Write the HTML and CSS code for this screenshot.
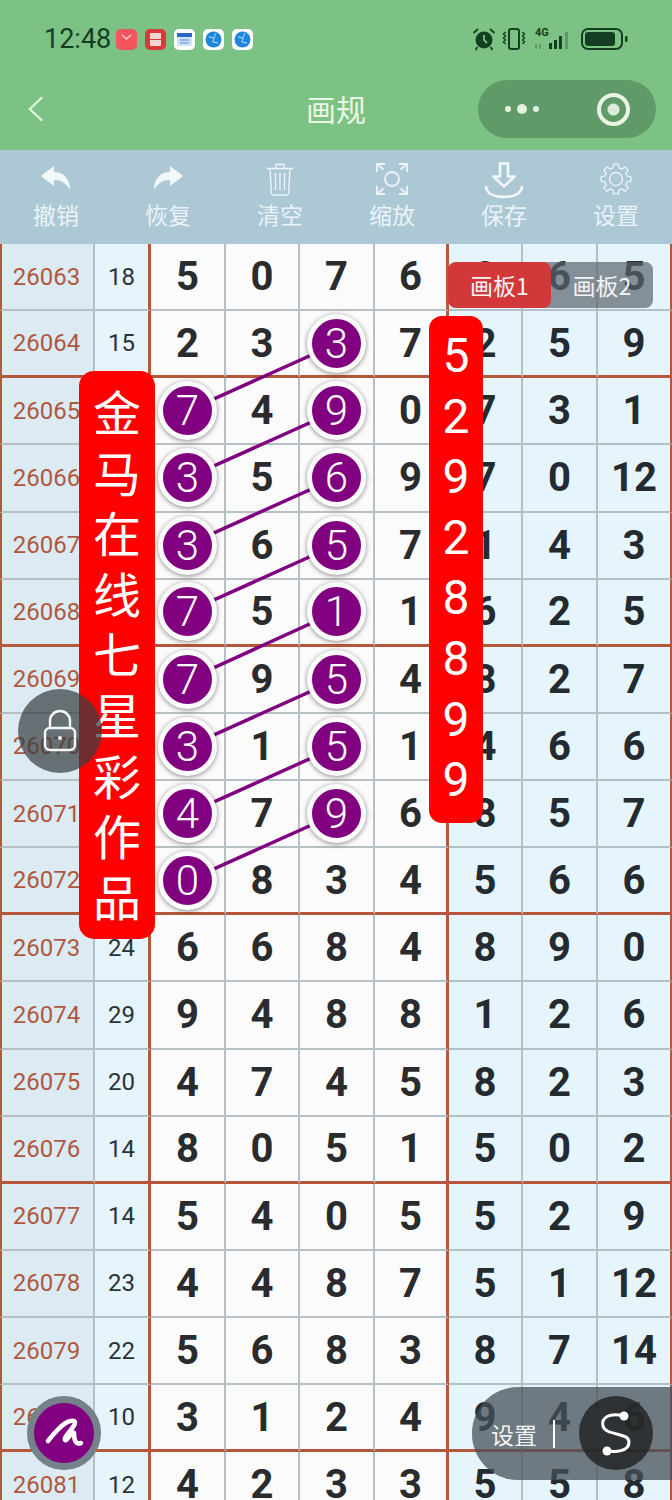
FILE: index.html
```html
<!DOCTYPE html>
<html lang="zh">
<head>
<meta charset="utf-8">
<title>画规</title>
<link rel="stylesheet" href="styles.css">
</head>
<body>
<div class="page">
  <header class="head">
    <div class="status">
      <span class="time">12:48</span>
      <div class="notes">
        <span class="note red"><svg viewBox="0 0 21 21"><path d="M6 6l4.500 4 4.500-4" fill="none" stroke="#ffd0d0" stroke-width="1.500"/></svg></span>
        <span class="note dred"><svg viewBox="0 0 21 21"><rect x="5" y="4" width="11" height="13" rx="1" fill="#f7d5d5"/><path d="M5 10.500h11" stroke="#d93a3a"/></svg></span>
        <span class="note"><svg viewBox="0 0 21 21"><rect x="3" y="4" width="15" height="13" rx="2" fill="#cfe2fa"/><rect x="3" y="4" width="15" height="4" fill="#2a66c8"/><path d="M6 11h9M6 14h9" stroke="#7fa8e0" stroke-width="1.500"/></svg></span>
        <span class="note"><svg viewBox="0 0 21 21"><circle cx="10.500" cy="10.500" r="8" fill="#1f86de"/><path d="M6 8l5 1-1 4 5 1M13 4l-2 5" fill="none" stroke="#8cc8f5" stroke-width="1.300"/></svg></span>
        <span class="note"><svg viewBox="0 0 21 21"><circle cx="10.500" cy="10.500" r="8" fill="#1f86de"/><path d="M6 8l5 1-1 4 5 1M13 4l-2 5" fill="none" stroke="#8cc8f5" stroke-width="1.300"/></svg></span>
      </div>
      <div class="sys">
        <svg class="s-alarm" viewBox="0 0 24 24"><circle cx="12" cy="13" r="8.500" fill="#143f22"/><path d="M12 8v5l3 3" fill="none" stroke="#7dc285" stroke-width="1.800"/><path d="M1.500 6L6 2M22.500 6L18 2M5.500 20l-2 3M18.500 20l2 3" stroke="#143f22" stroke-width="1.800" fill="none"/></svg>
        <svg class="s-vib" viewBox="0 0 26 22"><rect x="8" y="1" width="10" height="20" rx="2" fill="none" stroke="#143f22" stroke-width="2"/><path d="M4.500 4l-2 2 2 2-2 2 2 2-2 2 2 2M21.500 4l2 2-2 2 2 2-2 2 2 2-2 2" fill="none" stroke="#143f22" stroke-width="1.500"/></svg>
        <div class="s-net"><span class="g4">4G</span><svg viewBox="0 0 38 22"><rect x="0" y="16" width="2" height="5" fill="#5c9a68"/><rect x="4" y="16" width="2" height="5" fill="#5c9a68"/><rect x="14" y="15" width="3" height="6" fill="#143f22"/><rect x="19" y="12" width="3" height="9" fill="#143f22"/><rect x="24" y="8" width="3" height="13" fill="#143f22"/><rect x="30" y="4" width="3" height="17" fill="#5c9a68"/></svg></div>
        <svg class="s-bat" viewBox="0 0 47 22"><rect x="1" y="1" width="40" height="20" rx="6" fill="none" stroke="#143f22" stroke-width="2"/><rect x="4" y="4" width="30" height="14" rx="3" fill="#143f22"/><rect x="44" y="8" width="2.500" height="6" rx="1.200" fill="#143f22"/></svg>
      </div>
    </div>
    <nav class="nav">
      <svg class="back" viewBox="0 0 20 30"><path d="M17 2L3 15l14 13" fill="none" stroke="#e4f5dd" stroke-width="2.400"/></svg>
      <span class="title">画规</span>
      <div class="capsule">
        <span class="dots"><i></i><i class="big"></i><i></i></span>
        <span class="ring"></span>
      </div>
    </nav>
  </header>
  <div class="tools">
    <div class="tool"><svg viewBox="0 0 32 34"><path d="M1 14L14 4v6c10 0 16 7 16 18-4-7-9-10-16-10v6z" fill="#f2f7f9"/></svg><span>撤销</span></div>
    <div class="tool"><svg viewBox="0 0 32 34"><path d="M31 14L18 4v6C8 10 2 17 2 28c4-7 9-10 16-10v6z" fill="#f2f7f9"/></svg><span>恢复</span></div>
    <div class="tool"><svg viewBox="0 0 32 34" fill="none" stroke="#eef5f8" stroke-width="1.300"><path d="M3 6.500h26M12 6V2.500h8V6M6 7l1.500 24.500c0 1 1 1.500 2 1.500h13c1 0 2-.5 2-1.500L26 7M11.500 11v17M16 11v17M20.500 11v17"/></svg><span>清空</span></div>
    <div class="tool"><svg viewBox="0 0 32 34" fill="none" stroke="#eef5f8" stroke-width="1.800"><circle cx="16" cy="17" r="7"/><path d="M1 10V2h8M1.500 2.500l6 5M31 10V2h-8M30.500 2.500l-6 5M1 24v8h8M1.500 31.500l6-5M31 24v8h-8M30.500 31.500l-6-5"/></svg><span>缩放</span></div>
    <div class="tool"><svg class="wide" viewBox="0 0 40 37" fill="none" stroke="#f2f7f9" stroke-width="2.600"><path d="M16 1.500h8v13h6.500L20 24.500 9.500 14.500H16z" stroke-linejoin="round"/><path d="M2 25c1 7 9 10 18 10s17-3 18-10" stroke-linecap="round"/></svg><span>保存</span></div>
    <div class="tool"><svg viewBox="0 0 32 34" fill="none" stroke="#eef5f8" stroke-width="1.300"><g transform="translate(0 1)"><path stroke-linejoin="round" d="M13.220 4.840L13.650 1.200H18.350L18.780 4.840L21.920 6.140L24.820 3.860L28.140 7.180L25.860 10.080L27.160 13.220L30.800 13.650V18.350L27.160 18.780L25.860 21.920L28.140 24.820L24.820 28.140L21.920 25.860L18.780 27.160L18.350 30.800H13.650L13.220 27.160L10.080 25.860L7.180 28.140L3.860 24.820L6.140 21.920L4.840 18.780L1.200 18.350V13.650L4.840 13.220L6.140 10.080L3.860 7.180L7.180 3.860L10.080 6.140Z"/><circle cx="16" cy="16" r="6.500"/></g></svg><span>设置</span></div>
  </div>
  <main class="sheet">
    <div class="row"><div class="c date">26063</div><div class="c sum">18</div><div class="c n">5</div><div class="c n">0</div><div class="c n">7</div><div class="c n e">6</div><div class="c n b">8</div><div class="c n b">6</div><div class="c n b l">5</div></div>
    <div class="row sep"><div class="c date">26064</div><div class="c sum">15</div><div class="c n">2</div><div class="c n">3</div><div class="c n"><span class="ball">3</span></div><div class="c n e">7</div><div class="c n b">2</div><div class="c n b">5</div><div class="c n b l">9</div></div>
    <div class="row"><div class="c date">26065</div><div class="c sum">20</div><div class="c n"><span class="ball">7</span></div><div class="c n">4</div><div class="c n"><span class="ball">9</span></div><div class="c n e">0</div><div class="c n b">7</div><div class="c n b">3</div><div class="c n b l">1</div></div>
    <div class="row"><div class="c date">26066</div><div class="c sum">23</div><div class="c n"><span class="ball">3</span></div><div class="c n">5</div><div class="c n"><span class="ball">6</span></div><div class="c n e">9</div><div class="c n b">7</div><div class="c n b">0</div><div class="c n b l">12</div></div>
    <div class="row"><div class="c date">26067</div><div class="c sum">21</div><div class="c n"><span class="ball">3</span></div><div class="c n">6</div><div class="c n"><span class="ball">5</span></div><div class="c n e">7</div><div class="c n b">1</div><div class="c n b">4</div><div class="c n b l">3</div></div>
    <div class="row sep"><div class="c date">26068</div><div class="c sum">14</div><div class="c n"><span class="ball">7</span></div><div class="c n">5</div><div class="c n"><span class="ball">1</span></div><div class="c n e">1</div><div class="c n b">6</div><div class="c n b">2</div><div class="c n b l">5</div></div>
    <div class="row"><div class="c date">26069</div><div class="c sum">25</div><div class="c n"><span class="ball">7</span></div><div class="c n">9</div><div class="c n"><span class="ball">5</span></div><div class="c n e">4</div><div class="c n b">8</div><div class="c n b">2</div><div class="c n b l">7</div></div>
    <div class="row"><div class="c date">26070</div><div class="c sum">10</div><div class="c n"><span class="ball">3</span></div><div class="c n">1</div><div class="c n"><span class="ball">5</span></div><div class="c n e">1</div><div class="c n b">4</div><div class="c n b">6</div><div class="c n b l">6</div></div>
    <div class="row"><div class="c date">26071</div><div class="c sum">26</div><div class="c n"><span class="ball">4</span></div><div class="c n">7</div><div class="c n"><span class="ball">9</span></div><div class="c n e">6</div><div class="c n b">8</div><div class="c n b">5</div><div class="c n b l">7</div></div>
    <div class="row sep"><div class="c date">26072</div><div class="c sum">15</div><div class="c n"><span class="ball">0</span></div><div class="c n">8</div><div class="c n">3</div><div class="c n e">4</div><div class="c n b">5</div><div class="c n b">6</div><div class="c n b l">6</div></div>
    <div class="row"><div class="c date">26073</div><div class="c sum">24</div><div class="c n">6</div><div class="c n">6</div><div class="c n">8</div><div class="c n e">4</div><div class="c n b">8</div><div class="c n b">9</div><div class="c n b l">0</div></div>
    <div class="row"><div class="c date">26074</div><div class="c sum">29</div><div class="c n">9</div><div class="c n">4</div><div class="c n">8</div><div class="c n e">8</div><div class="c n b">1</div><div class="c n b">2</div><div class="c n b l">6</div></div>
    <div class="row"><div class="c date">26075</div><div class="c sum">20</div><div class="c n">4</div><div class="c n">7</div><div class="c n">4</div><div class="c n e">5</div><div class="c n b">8</div><div class="c n b">2</div><div class="c n b l">3</div></div>
    <div class="row sep"><div class="c date">26076</div><div class="c sum">14</div><div class="c n">8</div><div class="c n">0</div><div class="c n">5</div><div class="c n e">1</div><div class="c n b">5</div><div class="c n b">0</div><div class="c n b l">2</div></div>
    <div class="row"><div class="c date">26077</div><div class="c sum">14</div><div class="c n">5</div><div class="c n">4</div><div class="c n">0</div><div class="c n e">5</div><div class="c n b">5</div><div class="c n b">2</div><div class="c n b l">9</div></div>
    <div class="row"><div class="c date">26078</div><div class="c sum">23</div><div class="c n">4</div><div class="c n">4</div><div class="c n">8</div><div class="c n e">7</div><div class="c n b">5</div><div class="c n b">1</div><div class="c n b l">12</div></div>
    <div class="row"><div class="c date">26079</div><div class="c sum">22</div><div class="c n">5</div><div class="c n">6</div><div class="c n">8</div><div class="c n e">3</div><div class="c n b">8</div><div class="c n b">7</div><div class="c n b l">14</div></div>
    <div class="row sep"><div class="c date">26080</div><div class="c sum">10</div><div class="c n">3</div><div class="c n">1</div><div class="c n">2</div><div class="c n e">4</div><div class="c n b">9</div><div class="c n b">4</div><div class="c n b l">6</div></div>
    <div class="row"><div class="c date">26081</div><div class="c sum">12</div><div class="c n">4</div><div class="c n">2</div><div class="c n">3</div><div class="c n e">3</div><div class="c n b">5</div><div class="c n b">5</div><div class="c n b l">8</div></div>
    <svg class="links" viewBox="0 0 672 1257">
      <path d="M187 167L336 100M187 234L336 167M187 301L336 234M187 368L336 301M187 436L336 368M187 503L336 436M187 570L336 503M187 637L336 570"/>
    </svg>
  </main>
  <div class="tabs"><span class="tab on">画板1</span><span class="tab off">画板2</span></div>
  <div class="strip left"><span>金</span><span>马</span><span>在</span><span>线</span><span>七</span><span>星</span><span>彩</span><span>作</span><span>品</span></div>
  <div class="strip right"><span>5</span><span>2</span><span>9</span><span>2</span><span>8</span><span>8</span><span>9</span><span>9</span></div>
  <div class="lock"><svg viewBox="0 0 36 44" fill="none" stroke="#f4f6f7" stroke-width="2.400"><path d="M8 19v-7a10 10 0 0 1 20 0v7"/><rect x="3" y="19" width="30" height="22" rx="5"/><circle cx="18" cy="29" r="2" fill="#f4f6f7" stroke="none"/></svg></div>
  <div class="pen"><svg viewBox="0 0 60 60"><path d="M14 38C22 28 32 16 40 18 45 21 29 33 31 37 33 39 38 27 40 30 40 36 41 42 47 40" fill="none" stroke="#fff" stroke-width="4.500" stroke-linecap="round" stroke-linejoin="round"/></svg></div>
  <div class="dock"><span class="dock-label">设置</span><span class="dock-bar"></span><span class="dock-btn"><svg viewBox="0 0 74 74"><path d="M45 20C30 16 22 22 24 30 26 40 50 36 50 46 50 56 36 56 28 55" fill="none" stroke="#fff" stroke-width="3"/><circle cx="45" cy="20" r="4.500" fill="#fff"/><circle cx="28" cy="55" r="4.500" fill="#fff"/></svg></span></div>
</div>
</body>
</html>
```
FILE: styles.css
```css
* { box-sizing: border-box; }
html, body { margin: 0; padding: 0; }
body { font-family: "Noto Sans CJK SC", "Roboto", sans-serif; }
.page { position: relative; width: 672px; height: 1500px; overflow: hidden; background: #fff; }

.head { height: 150px; background: #7dc285; display: flex; flex-direction: column; }
.status { height: 80px; display: flex; align-items: center; padding: 0 44px 2px 44px; }
.time { font-family: "Roboto", sans-serif; font-size: 27px; color: #123f20; width: 72px; }
.notes { display: flex; gap: 8px; }
.note { width: 21px; height: 21px; border-radius: 5px; background: #fff; display: block; }
.note svg { display: block; width: 21px; height: 21px; }
.note.red { background: #f4555c; }
.note.dred { background: #d93a3a; }
.sys { margin-left: auto; display: flex; align-items: center; }
.s-alarm { width: 24px; height: 24px; margin-right: 5px; }
.s-vib { width: 26px; height: 22px; margin-right: 8px; }
.s-net { position: relative; width: 38px; height: 22px; margin-right: 8px; }
.s-net svg { display: block; width: 38px; height: 22px; }
.g4 { position: absolute; left: 0; top: -2px; font: 700 11px "Roboto", sans-serif; color: #143f22; }
.s-bat { width: 47px; height: 22px; }

.nav { flex: 1; position: relative; display: flex; align-items: center; justify-content: center; padding-bottom: 14px; }
.back { position: absolute; left: 27px; top: 14px; width: 18px; height: 30px; }
.title { font-size: 30px; color: #eaf6e6; line-height: 40px; }
.capsule { position: absolute; left: 478px; top: 0; width: 178px; height: 58px; border-radius: 29px; background: #5f9a68; display: flex; align-items: center; }
.dots { display: flex; align-items: center; gap: 6px; margin-left: 27px; }
.dots i { display: block; width: 6px; height: 6px; border-radius: 50%; background: #e4f2df; }
.dots i.big { width: 10px; height: 10px; }
.ring { margin-left: 58px; width: 33px; height: 33px; border-radius: 50%; border: 4px solid #e9f5e2; display: block; background: radial-gradient(circle, #dcecd7 0 5.500px, transparent 6.500px); }

.tools { height: 94px; background: #adc8d5; display: grid; grid-template-columns: repeat(6, 112px); }
.tool { display: flex; flex-direction: column; align-items: center; padding-top: 12px; color: #eaf3f7; font-size: 23px; line-height: 30px; }
.tool svg { width: 32px; height: 34px; display: block; margin-bottom: 3px; }
.tool svg.wide { width: 40px; height: 37px; margin-bottom: 0; }

.sheet { position: relative; font-family: "Roboto", sans-serif; }
.row { display: grid; grid-template-columns: 95px 56px 75px 74px 75px 74px 74px 75px 74px; height: 67.125px; }
.c { display: flex; align-items: center; justify-content: center; border-right: 2px solid #b6bfc4; border-bottom: 2px solid #b6bfc4; }
.date { background: #dcebf3; color: #b0583d; font-size: 24px; border-left: 2px solid #b5573a; padding-right: 2px; }
.sum { background: #e6f4fc; color: #2b3238; font-size: 24px; border-right: 3px solid #b5573a; }
.n { background: #fbfbfb; color: #292b2d; font-size: 40px; font-weight: 700; }
.n.e { border-right: 3px solid #b5573a; }
.n.b { background: #e6f4fc; color: #232a30; }
.n.l { border-right: 2px solid #b5573a; }
.sep .c { border-bottom: 3px solid #b5573a; }
.ball { position: relative; z-index: 2; width: 59px; height: 59px; border-radius: 50%; background: #800080; border: 5px solid #fbfbfb; box-shadow: 0 1px 5px rgba(0, 0, 0, .45); color: #fff; font-size: 42px; font-weight: 300; display: flex; align-items: center; justify-content: center; }
.links { position: absolute; left: 0; top: 0; width: 672px; height: 1257px; z-index: 1; pointer-events: none; }
.links path { fill: none; stroke: #800080; stroke-width: 3.500px; }

.tabs { position: absolute; left: 448px; top: 262px; display: flex; z-index: 3; }
.tab { width: 103px; height: 46px; display: flex; align-items: center; justify-content: center; color: #f4f4f4; font-size: 23px; border-radius: 8px; }
.tab.on { background: #d2383a; position: relative; z-index: 1; }
.tab.off { background: rgba(90, 100, 108, .7); margin-left: -12px; width: 114px; padding-left: 12px; border-radius: 0 8px 8px 0; }

.strip { position: absolute; z-index: 4; background: #fe0000; color: #fff; display: flex; flex-direction: column; align-items: center; }
.strip span { display: block; line-height: 60.600px; height: 60.600px; }
.strip.left { left: 79px; top: 371px; width: 76px; height: 568px; border-radius: 15px; font-size: 48px; padding-top: 9px; }
.strip.right { left: 429px; top: 316px; width: 54px; height: 507px; border-radius: 13px; font-family: "Roboto", sans-serif; font-weight: 400; font-size: 48px; padding-top: 10px; }

.lock { position: absolute; z-index: 5; left: 18px; top: 689px; width: 84px; height: 84px; border-radius: 50%; background: rgba(55, 62, 66, .72); display: flex; align-items: center; justify-content: center; }
.lock svg { width: 36px; height: 44px; }
.pen { position: absolute; z-index: 5; left: 27px; top: 1396px; width: 74px; height: 74px; border-radius: 50%; background: #800080; border: 7px solid #75828a; }
.pen svg { display: block; width: 60px; height: 60px; }
.dock { position: absolute; z-index: 5; left: 472px; top: 1387px; width: 200px; height: 93px; border-radius: 46px 0 0 46px; background: rgba(70, 80, 88, .75); display: flex; align-items: center; padding-left: 19px; }
.dock-label { color: #f2f2f2; font-size: 23px; line-height: 30px; }
.dock-bar { width: 2px; height: 28px; background: #fff; margin-left: 16px; }
.dock-btn { position: absolute; left: 107px; top: 9px; width: 74px; height: 74px; border-radius: 50%; background: rgba(30, 32, 32, .8); }
.dock-btn svg { display: block; width: 74px; height: 74px; }
```
